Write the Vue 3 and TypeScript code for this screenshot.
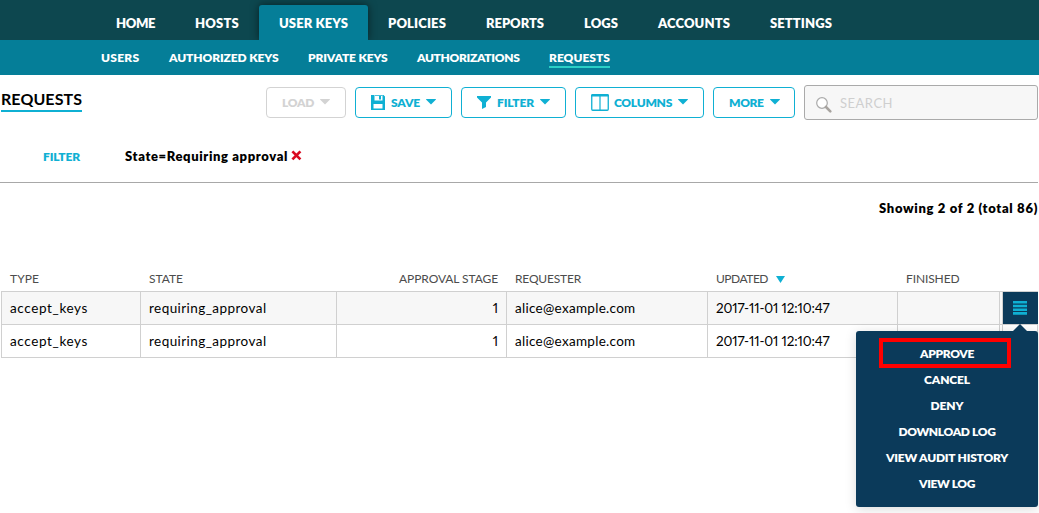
<script setup lang="ts">
interface Label { text: string; width: number }
interface Column extends Label { key: string; align?: 'right'; sorted?: boolean }

const mainNav: (Label & { active?: boolean })[] = [
  { text: 'HOME', width: 39 },
  { text: 'HOSTS', width: 44 },
  { text: 'USER KEYS', width: 69, active: true },
  { text: 'POLICIES', width: 58 },
  { text: 'REPORTS', width: 58 },
  { text: 'LOGS', width: 34 },
  { text: 'ACCOUNTS', width: 72 },
  { text: 'SETTINGS', width: 62 },
]
const subNav: (Label & { active?: boolean })[] = [
  { text: 'USERS', width: 38.5 },
  { text: 'AUTHORIZED KEYS', width: 109.5 },
  { text: 'PRIVATE KEYS', width: 79.5 },
  { text: 'AUTHORIZATIONS', width: 102.5 },
  { text: 'REQUESTS', width: 61, active: true },
]
const buttons: (Label & { icon?: string })[] = [
  { text: 'LOAD', width: 32 },
  { text: 'SAVE', width: 29, icon: 'save' },
  { text: 'FILTER', width: 37, icon: 'filter' },
  { text: 'COLUMNS', width: 58, icon: 'columns' },
  { text: 'MORE', width: 34.5 },
]
const columns: Column[] = [
  { key: 'type', text: 'TYPE', width: 29 },
  { key: 'state', text: 'STATE', width: 34 },
  { key: 'stage', text: 'APPROVAL STAGE', width: 99, align: 'right' },
  { key: 'requester', text: 'REQUESTER', width: 66 },
  { key: 'updated', text: 'UPDATED', width: 52, sorted: true },
  { key: 'finished', text: 'FINISHED', width: 53.5 },
]
const row: Record<string, Label> = {
  type: { text: 'accept_keys', width: 78 },
  state: { text: 'requiring_approval', width: 117.5 },
  stage: { text: '1', width: 6 },
  requester: { text: 'alice@example.com', width: 120.5 },
  updated: { text: '2017-11-01 12:10:47', width: 113.5 },
  finished: { text: '', width: 0 },
}
const rows = [row, row]
const actions: Label[] = [
  { text: 'APPROVE', width: 54 },
  { text: 'CANCEL', width: 46 },
  { text: 'DENY', width: 33 },
  { text: 'DOWNLOAD LOG', width: 97 },
  { text: 'VIEW AUDIT HISTORY', width: 122 },
  { text: 'VIEW LOG', width: 56 },
]

// Tracks a label so that it fills the given width in pixels.
const vFit = {
  mounted(el: HTMLElement, { value }: { value: number }) {
    const n = (el.textContent ?? '').length
    if (n < 2) return
    const spacing = (value - el.getBoundingClientRect().width) / n
    el.style.letterSpacing = `${spacing.toFixed(3)}px`
  },
}
</script>

<template>
  <div class="page">
    <nav class="main-nav">
      <a v-for="n in mainNav" :key="n.text" :class="{ active: n.active }"><span v-fit="n.width" class="t">{{ n.text }}</span></a>
    </nav>
    <nav class="sub-nav">
      <a v-for="n in subNav" :key="n.text" :class="{ active: n.active }"><span v-fit="n.width" class="t">{{ n.text }}</span></a>
    </nav>

    <header class="toolbar">
      <h1><span v-fit="81" class="t">REQUESTS</span></h1>
      <button v-for="b in buttons" :key="b.text" :class="['btn', b.text.toLowerCase()]">
        <svg v-if="b.icon === 'save'" width="14" height="15" viewBox="0 0 14 15">
          <path fill="currentColor" fill-rule="evenodd" d="M0 0h12.500L14 1.500V15H0zM3.500 0v5.500h8V0zM2.500 9v4.500h9V9z" />
          <path fill="currentColor" d="M4 0h7.500v.8H4zM8 1h2v3.500H8z" />
        </svg>
        <svg v-else-if="b.icon === 'filter'" width="14" height="13" viewBox="0 0 14 13">
          <path fill="currentColor" d="M0 0h14v1.500L9 6.500V11l-4 2V6.500L0 1.500z" />
        </svg>
        <svg v-else-if="b.icon === 'columns'" width="18" height="17" viewBox="0 0 18 17">
          <rect x=".75" y="1" width="16.500" height="15.250" rx="1" fill="none" stroke="currentColor" stroke-width="1.300" />
          <path fill="currentColor" d="M1 0h16l1 1v1.500H0V1zM8.400 2h1.200v14H8.400z" />
        </svg>
        <span v-fit="b.width" class="t">{{ b.text }}</span>
        <svg class="caret" width="10" height="6" viewBox="0 0 10 6"><path fill="currentColor" d="M.3 0h9.400L10 .5 5 5.500 0 .5z" /></svg>
      </button>
      <div class="search">
        <svg width="16" height="16" viewBox="0 0 16 16">
          <circle cx="6" cy="6" r="5.300" fill="#fff" stroke="#aaa" stroke-width="1.200" />
          <path d="M10 10l4.300 4.300" stroke="#a8a4a0" stroke-width="2.600" stroke-linecap="round" />
        </svg>
        <span v-fit="53" class="t">SEARCH</span>
      </div>
    </header>

    <section class="filters">
      <span class="caption"><span v-fit="37" class="t">FILTER</span></span>
      <span v-fit="163" class="t">State=Requiring approval</span>
      <svg class="remove" width="11" height="11" viewBox="0 0 11 11"><path d="M1.400 1.400l8 8M9.400 1.400l-8 8" stroke="#d90a20" stroke-width="2.700" /></svg>
    </section>

    <p class="summary"><span v-fit="159" class="t">Showing 2 of 2 (total 86)</span></p>

    <div class="grid head">
      <div v-for="c in columns" :key="c.key" :class="['cell', c.align]">
        <span v-fit="c.width" class="t">{{ c.text }}</span>
        <svg v-if="c.sorted" class="sort" width="9" height="7" viewBox="0 0 9 7"><path fill="#0fb0d3" d="M0 0h9L4.500 7z" /></svg>
      </div>
    </div>
    <div class="body">
      <div v-for="(r, i) in rows" :key="i" class="grid row">
        <div v-for="c in columns" :key="c.key" :class="['cell', c.align]">
          <span v-fit="r[c.key].width" class="t">{{ r[c.key].text }}</span>
        </div>
        <div class="gap"></div>
        <div :class="['action', { open: i === 0 }]">
          <svg v-if="i === 0" width="14" height="14" viewBox="0 0 14 14"><path fill="#0fb0d3" d="M0 0h14v2.500H0zM0 3.700h14v2.500H0zM0 7.400h14v2.500H0zM0 11.100h14v2.700H0z" /></svg>
        </div>
      </div>
      <div class="menu">
        <div v-for="(a, i) in actions" :key="a.text" class="item"><span v-fit="a.width" class="t">{{ a.text }}</span>
          <div v-if="i === 0" class="highlight"></div>
        </div>
      </div>
    </div>
  </div>
</template>

<style>
body { margin: 0; background: #fff; }
</style>

<style scoped>
.page { width: 1039px; height: 513px; overflow: hidden; background: #fff; font-family: Lato, "Liberation Sans", sans-serif; color: #000; font-size: 13px; font-variant-numeric: proportional-nums; }
.t { display: inline-block; white-space: nowrap; }
.main-nav { height: 40px; box-sizing: border-box; padding: 5px 0 0 96px; display: flex; background: #0d474f; color: #fff; font-weight: 800; overflow: hidden; }
.main-nav a { padding: 0 20px; height: 35px; line-height: 36px; }
.main-nav a.active { background: #057e98; border-radius: 3px 3px 0 0; box-shadow: 0 0 8px rgba(0, 0, 0, .55); }
.sub-nav { height: 35px; padding-left: 101px; display: flex; gap: 29.5px; align-items: flex-start; background: #057e98; color: #fff; font-size: 12px; font-weight: 800; }
.sub-nav a { height: 16px; line-height: 16px; padding-top: 10px; }
.sub-nav a.active { border-bottom: 2px solid #2bd0c6; }
.toolbar { height: 35px; padding: 10px 1px 0; display: flex; align-items: center; }
h1 { margin: -3px 184px 0 0; height: 20px; line-height: 18px; font-size: 16px; font-weight: 700; border-bottom: 2px solid #0fb0d3; flex: none; width: 81px; }
.btn { box-sizing: border-box; height: 31px; margin: 0 9px 0 0; padding: 0 0 0 15px; border: 1px solid #0fb0d3; border-radius: 4px; background: #fff; color: #0fb0d3; font: 800 12px Lato, "Liberation Sans", sans-serif; display: flex; align-items: center; flex: none; }
.btn svg { margin-right: 6px; flex: none; }
.btn.columns svg { margin-right: 5px; }
.btn .t { line-height: 16px; }
.btn svg.caret, .btn.columns svg.caret { margin: 0 0 1px 6px; }
.load { width: 80px; border-color: #d3d3d3; color: #d3d3d3; }
.save { width: 97px; }
.filter { width: 105px; }
.columns { width: 129px; }
.more { width: 82px; }
.search { flex: 1; box-sizing: border-box; height: 35px; border: 1px solid #aaa; border-radius: 3px; background: #f7f7f7; padding-left: 11px; display: flex; align-items: center; color: #cfcfcf; }
.search svg { margin: 4px 8px 0 0; }
.filters { box-sizing: border-box; height: 63px; padding-top: 10px; margin-right: 1px; display: flex; align-items: center; border-bottom: 1px solid #a8a8a8; font-weight: 800; }
.caption { width: 82px; margin-left: 43px; color: #0fb0d3; font-size: 12px; }
.remove { margin: 0 0 2px 3px; }
.summary { margin: 15px 1px 0 0; height: 20px; line-height: 20px; text-align: right; font-weight: 800; }
.grid { display: grid; grid-template-columns: 139px 196px 170px 201px 190px 102px 3px 36px; }
.cell { box-sizing: border-box; padding: 0 8px; border-left: 1px solid #d0d0d0; }
.cell.right { text-align: right; }
.head { margin: 51px 0 0 1px; height: 22px; line-height: 20px; font-size: 12px; color: #4c4c4c; }
.head .cell { border-color: transparent; }
.sort { margin-left: 8px; }
.body { position: relative; margin-left: 1px; width: 1037px; border-top: 1px solid #d0d0d0; }
.row { height: 33px; box-sizing: border-box; border-bottom: 1px solid #d0d0d0; line-height: 32px; font-size: 13.5px; }
.row:first-child { background: #f7f7f7; }
.gap { border-left: 1px solid #d0d0d0; }
.action { box-sizing: border-box; display: flex; align-items: center; justify-content: center; border-left: 1px solid #d0d0d0; border-right: 1px solid #d0d0d0; }
.action.open { background: #0b3a5a; border-right-color: #0b3a5a; }
.menu { position: absolute; left: 855px; top: 39px; width: 182px; height: 176px; box-sizing: border-box; padding-top: 10px; border-radius: 3px; background: #0b3a5a; color: #fff; font-size: 12px; font-weight: 800; text-align: center; box-shadow: 0 2px 12px rgba(0, 0, 0, .15); }
.menu::before { content: ""; position: absolute; left: 157px; top: -7px; border: solid transparent; border-width: 0 7px 7px; border-bottom-color: #0b3a5a; }
.item { position: relative; height: 26px; line-height: 26px; }
.highlight { position: absolute; left: 23px; top: -3px; width: 124px; height: 22px; border: 4px solid #f00; }
</style>
